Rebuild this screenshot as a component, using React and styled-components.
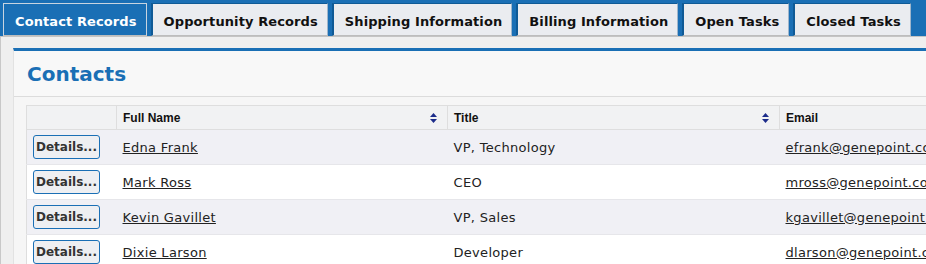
import React from 'react'
import styled, { createGlobalStyle } from 'styled-components'

const GlobalStyle = createGlobalStyle`
  html, body {
    margin: 0;
    padding: 0;
    overflow: hidden;
    background: #f0f0f0;
    font-family: "DejaVu Sans", Verdana, sans-serif;
  }
`

const blue = '#1a6fb5'

const tabs = [
  'Contact Records',
  'Opportunity Records',
  'Shipping Information',
  'Billing Information',
  'Open Tasks',
  'Closed Tasks',
]

const contacts = [
  { name: 'Edna Frank', title: 'VP, Technology', email: 'efrank@genepoint.com' },
  { name: 'Mark Ross', title: 'CEO', email: 'mross@genepoint.com' },
  { name: 'Kevin Gavillet', title: 'VP, Sales', email: 'kgavillet@genepoint.com' },
  { name: 'Dixie Larson', title: 'Developer', email: 'dlarson@genepoint.com' },
]

const SortIcon = () => (
  <svg width="7" height="10" viewBox="0 0 7 10">
    <path d="M3.5 0 L7 4 L0 4 Z M0 6 L7 6 L3.5 10 Z" fill="#1c2c8a" />
  </svg>
)

const App = () => {
  return (
    <Page>
      <GlobalStyle />
      <TabBar>
        {tabs.map((t, i) => (
          <Tab key={t} active={i === 0}>{t}</Tab>
        ))}
      </TabBar>
      <Body>
        <Panel>
          <PanelHead>
            <Heading>Contacts</Heading>
          </PanelHead>
          <PanelBody>
            <Table>
              <colgroup>
                <col style={{ width: 90 }} />
                <col style={{ width: 331 }} />
                <col style={{ width: 332 }} />
                <col style={{ width: 300 }} />
              </colgroup>
              <thead>
                <tr>
                  <Th />
                  <Th>
                    <HeadCell>Full Name<SortIcon /></HeadCell>
                  </Th>
                  <Th>
                    <HeadCell>Title<SortIcon /></HeadCell>
                  </Th>
                  <Th>
                    <HeadCell>Email</HeadCell>
                  </Th>
                </tr>
              </thead>
              <tbody>
                {contacts.map((c, i) => (
                  <Row key={c.name} odd={i % 2 === 0}>
                    <Td>
                      <DetailsButton>Details...</DetailsButton>
                    </Td>
                    <Td><Link>{c.name}</Link></Td>
                    <Td>{c.title}</Td>
                    <Td><Link>{c.email}</Link></Td>
                  </Row>
                ))}
              </tbody>
            </Table>
          </PanelBody>
        </Panel>
      </Body>
    </Page>
  )
}

const Page = styled.div`
  width: 926px;
  height: 264px;
  overflow: hidden;
`

const TabBar = styled.div`
  display: flex;
  gap: 4px;
  background: ${blue};
  padding: 3px 0 0 3px;
  height: 33px;
`

const Tab = styled.div`
  display: flex;
  align-items: flex-end;
  box-sizing: border-box;
  height: 33px;
  padding: 0 9px 6px 11px;
  font-size: 13px;
  font-weight: bold;
  letter-spacing: 0.1px;
  white-space: nowrap;
  color: ${(p) => (p.active ? '#fff' : '#111')};
  background: ${(p) => (p.active ? blue : '#eaecf0')};
  border: 1px solid ${(p) => (p.active ? '#c8d4e0' : '#0f5a96')};
  border-left-width: ${(p) => (p.active ? '1px' : '2px')};
  border-right-color: ${(p) => (p.active ? '#c8d4e0' : '#9fb6cc')};
  border-bottom: 1px solid #bdbdbd;
`

const Body = styled.div`
  border-left: 1px solid #c8c8c8;
  border-top: 1px solid #c4c4c4;
  padding: 11px 0 0 12px;
  background: #efefef;
`

const Panel = styled.div`
  border-top: 3px solid ${blue};
  border-left: 1px solid #e2e2e2;
  background: #f8f8f8;
`

const PanelHead = styled.div`
  padding: 12px 13px 11px;
  border-bottom: 1px solid #dcdcdc;
`

const Heading = styled.h2`
  margin: 0;
  font-size: 20px;
  line-height: 22px;
  font-weight: bold;
  color: ${blue};
`

const PanelBody = styled.div`
  padding: 8px 0 0 12px;
  background: #f6f6f6;
`

const Table = styled.table`
  border-collapse: collapse;
  table-layout: fixed;
  width: 1053px;
  border-top: 1px solid #dedede;
  border-left: 1px solid #dedede;
`

const Th = styled.th`
  height: 23px;
  padding: 0 10px 0 6px;
  background: #f1f2f3;
  border-right: 1px solid #dedede;
  border-bottom: 1px solid #dedede;
  text-align: left;
  font-family: "Liberation Sans", Arial, sans-serif;
  font-size: 12px;
  font-weight: bold;
  color: #111;
`

const HeadCell = styled.div`
  display: flex;
  align-items: center;
  justify-content: space-between;
`

const Row = styled.tr`
  background: ${(p) => (p.odd ? '#f0f0f5' : '#ffffff')};
  border-bottom: 1px solid #e6e6ea;
`

const Td = styled.td`
  height: 34px;
  padding: 0 6px;
  font-size: 13px;
  letter-spacing: 0.3px;
  color: #222;
  white-space: nowrap;
  overflow: hidden;
`

const Link = styled.a`
  color: #222;
  text-decoration: underline;
  cursor: pointer;
`

const DetailsButton = styled.button`
  width: 67px;
  height: 24px;
  padding: 0;
  border: 1px solid ${blue};
  border-radius: 3px;
  background: #eeeff2;
  font-family: "DejaVu Sans", Verdana, sans-serif;
  font-size: 12px;
  font-weight: bold;
  letter-spacing: 0;
  color: #333;
`

export default App
